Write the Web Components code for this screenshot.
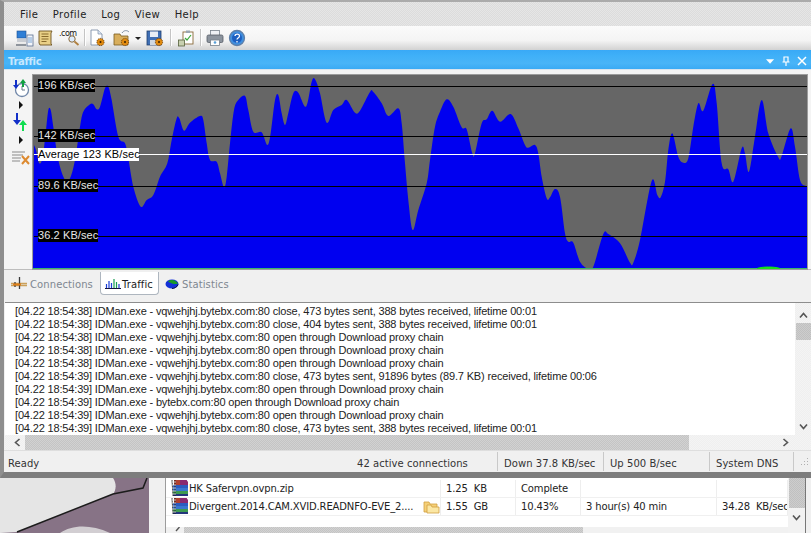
<!DOCTYPE html>
<html>
<head>
<meta charset="utf-8">
<title>Traffic</title>
<style>
html, body { margin: 0; padding: 0; background: #f0f0f0; }
body { width: 811px; height: 533px; overflow: hidden; font-family: "DejaVu Sans", sans-serif; }
</style>
</head>
<body>
<app-window>
  <menu-bar>
    <span>File</span><span>Profile</span><span>Log</span><span>View</span><span>Help</span>
  </menu-bar>
  <tool-bar></tool-bar>
  <pane-title>Traffic</pane-title>
  <traffic-panel></traffic-panel>
  <tab-strip></tab-strip>
  <log-view></log-view>
  <status-bar></status-bar>
</app-window>
<download-strip></download-strip>

<script>
'use strict';

const GEAR = (x, y) => `<circle cx="${x}" cy="${y}" r="3.6" fill="#e08a10" stroke="#5a3000" stroke-width=".8" stroke-dasharray="1.2 .8"/><circle cx="${x}" cy="${y}" r="1" fill="#3a2000"/>`;

class AppWindow extends HTMLElement {
  constructor() {
    super();
    this.attachShadow({mode: 'open'}).innerHTML = `
<style>
:host {
  display: flex;
  flex-direction: column;
  box-sizing: border-box;
  width: 811px;
  height: 478px;
  border-top: 2px solid #ababab;
  border-left: 4px solid #8e8e8e;
  border-bottom: 6px solid #7d7d7d;
  background: #f0f0f0;
}
</style>
<slot></slot>`;
  }
}

class MenuBar extends HTMLElement {
  constructor() {
    super();
    this.attachShadow({mode: 'open'}).innerHTML = `
<style>
:host {
  display: flex;
  height: 24px;
  align-items: center;
  padding-left: 16px;
  gap: 14.5px;
  font: 10px "DejaVu Sans", sans-serif;
  letter-spacing: .4px;
  color: #222;
  background: repeating-conic-gradient(#dcdcdc 0 25%, #e6e6e6 0 50%) 0 0 / 2px 2px;
}
::slotted(span) { padding-top: 1px; }
</style>
<slot></slot>`;
  }
}

class ToolBar extends HTMLElement {
  constructor() {
    super();
    this.attachShadow({mode: 'open'}).innerHTML = `
<style>
:host {
  display: flex;
  height: 24px;
  align-items: center;
  padding-left: 12px;
  background: linear-gradient(#fbfbfb, #f4f4f4 60%, #d2d2d2);
}
svg { display: block; width: 18px; height: 18px; flex: none; }
.sep { width: 1px; height: 17px; background: #c4c4c4; box-shadow: 1px 0 #fff; flex: none; }
.dom { font: 8px "DejaVu Sans", sans-serif; color: #111; letter-spacing: -.5px; }
.com { position: relative; width: 24px; height: 18px; flex: none; }
.com span { position: absolute; left: 0; top: 0; }
.com svg { position: absolute; left: 6px; top: 2px; width: 16px; height: 16px; }
</style>
<svg viewBox="0 0 18 18"><rect x="1" y="2" width="9" height="7" fill="#2f7fd6" stroke="#1c4f90" stroke-width=".6"/><rect x="1" y="10" width="9" height="3" fill="#c8ccd2"/><path d="M0 15h10v2H0z" fill="#8e949c"/><rect x="11" y="6" width="6" height="11" fill="#f4f6fa" stroke="#5a6e90" stroke-width=".8"/><path d="M12 9h4M12 11h4M12 13h4" stroke="#5a8fc8" stroke-width=".8"/></svg>
<svg viewBox="0 0 18 18" style="margin-left:2px"><path d="M3 2h13l-1 2v11l1 1H4l-1-2V4z" fill="#e9cf86" stroke="#6d5320" stroke-width=".9"/><path d="M5.500 5h7M5.500 7.500h7M5.500 10h7M5.500 12.500h5" stroke="#7d5f22" stroke-width=".9"/></svg>
<div class="com" style="margin-left:5px"><span class="dom">.com</span><svg viewBox="0 0 16 16"><circle cx="7" cy="8" r="3.200" fill="#dcecff" stroke="#8a6a3a" stroke-width="1"/><path d="M9.500 10.500l4 3.500" stroke="#b08040" stroke-width="1.800"/></svg></div>
<div class="sep" style="margin-left:1px"></div>
<svg viewBox="0 0 18 18" style="margin-left:3px"><path d="M3 1h7l4 4v11H3z" fill="#fff" stroke="#8090a8" stroke-width=".9"/><path d="M10 1v4h4" fill="#d8e4f4" stroke="#8090a8" stroke-width=".7"/>${GEAR(12.500, 13)}</svg>
<svg viewBox="0 0 18 18" style="margin-left:7px"><path d="M1 5h6l1 2h7v9H1z" fill="#d8ae5c" stroke="#7a5a20" stroke-width=".8"/><path d="M9 4c2-3 5-3 7-1" fill="none" stroke="#7c8ca0" stroke-width="1"/>${GEAR(12, 13)}</svg>
<svg viewBox="0 0 8 18" style="width:8px;margin-left:3px"><path d="M1 8h6l-3 3z" fill="#222"/></svg>
<svg viewBox="0 0 18 18" style="margin-left:4px"><rect x="1" y="2" width="14" height="14" fill="#3f6fb4" stroke="#22406e" stroke-width=".8"/><rect x="4" y="2.500" width="8" height="5.500" fill="#e8eef6"/><rect x="4" y="11" width="8" height="5" fill="#d0d8e0"/>${GEAR(13, 13)}</svg>
<div class="sep" style="margin-left:6px"></div>
<svg viewBox="0 0 18 18" style="margin-left:6px"><rect x="6" y="3" width="10" height="12" fill="#fff" stroke="#8a6a3a" stroke-width=".9"/><rect x="9" y="1.500" width="4" height="2.500" fill="#9aa5b0"/><path d="M8 9l2 2 4-5" fill="none" stroke="#3aa83a" stroke-width="1.200"/><rect x="1.500" y="11" width="6" height="6" fill="#c8d0b0" stroke="#55603c" stroke-width=".8"/></svg>
<div class="sep" style="margin-left:5px"></div>
<svg viewBox="0 0 18 18" style="margin-left:5px"><rect x="4.500" y="1.500" width="9" height="5" fill="#eef0f4" stroke="#77808a" stroke-width=".8"/><rect x="1" y="6" width="16" height="7.500" rx="1.500" fill="#8c949e" stroke="#555c66" stroke-width=".8"/><rect x="4.500" y="11" width="9" height="5.500" fill="#fff" stroke="#77808a" stroke-width=".8"/><circle cx="9" cy="13.500" r="1.300" fill="#58a0d8"/></svg>
<svg viewBox="0 0 18 18" style="margin-left:4px"><circle cx="9" cy="9" r="7.500" fill="#3f8fe0" stroke="#5f7fa8" stroke-width="1.300"/><circle cx="9" cy="9" r="5" fill="#1d5fc0"/><path d="M7 7c0-2.500 4.500-2.500 4.500 0 0 2-2.500 2-2.500 3.500M9 12v1.500" fill="none" stroke="#fff" stroke-width="1.300"/></svg>`;
  }
}

class PaneTitle extends HTMLElement {
  constructor() {
    super();
    this.attachShadow({mode: 'open'}).innerHTML = `
<style>
:host {
  display: flex;
  height: 20px;
  box-sizing: border-box;
  align-items: center;
  justify-content: space-between;
  padding: 3px 4px 0 4px;
  font: bold 10px "DejaVu Sans", sans-serif;
  letter-spacing: -.3px;
  color: #c6e8ff;
  background: linear-gradient(#39a9f6, #3fb0f8 30%, #49b4f7 70%, #3aaaf4);
}
.btns { display: flex; align-items: center; gap: 6px; margin-top: -1px; }
svg { display: block; width: 10px; height: 10px; }
</style>
<span><slot></slot></span>
<span class="btns">
  <svg viewBox="0 0 10 10" style="width:9px"><path d="M0 3h9L4.500 8z" fill="#fff"/></svg>
  <svg viewBox="0 0 10 10"><path d="M3 1h4v5H3zM1.500 6h7M5 6v4" fill="none" stroke="#fff" stroke-width="1.200"/></svg>
  <svg viewBox="0 0 10 10"><path d="M1 1l8 8M9 1l-8 8" stroke="#fff" stroke-width="1.500"/></svg>
</span>`;
  }
}

// outline of the graph, read off the picture: [x, y] in page pixels
const LEFT_PTS = [[12,225],[18,240],[28,280],[38,260],[48,180],[55,120],[62,120],[70,170],[85,270],[105,330],[120,325],[135,270],[150,170],[160,125],[180,103],[190,103],[200,118],[210,110],[225,55],[235,50],[245,90],[265,200],[285,220],[295,265],[310,350],[332,410],[350,390],[370,375],[390,320],[412,280],[425,210],[440,145],[448,145],[462,182],[480,158],[510,138],[520,150],[530,220],[540,270],[560,275],[570,310],[582,352],[590,320],[600,220],[612,120],[625,90],[645,78],[655,120],[670,185],[695,187],[712,225],[722,190],[735,90],[745,75],[755,130],[765,165],[775,130],[790,70],[805,68],[828,110],[845,35],[855,28],[870,70],[890,158],[910,120],[935,105],[950,90],[975,128],[990,122],[1020,66],[1030,66],[1055,100],[1075,138],[1105,115],[1115,160],[1125,280],[1135,390],[1148,480],[1165,420]].map(([x, y]) => [30 + x / 3, 70 + y / 3]);
const RIGHT_PTS = [[20,340],[30,270],[45,170],[60,125],[80,88],[100,110],[125,172],[140,178],[157,250],[165,250],[185,160],[200,148],[217,122],[240,155],[272,132],[295,175],[315,225],[325,233],[345,225],[355,250],[365,320],[380,385],[390,382],[405,357],[420,380],[435,490],[445,515],[460,518],[480,575],[505,597],[520,590],[550,492],[565,492],[600,520],[630,578],[640,578],[660,510],[695,333],[712,375],[722,382],[735,335],[745,240],[757,190],[775,260],[790,278],[805,265],[820,170],[835,100],[850,122],[878,42],[890,100],[905,280],[925,298],[940,335],[965,235],[975,250],[987,305],[1005,200],[1025,90],[1045,190],[1075,262],[1085,258],[1112,175],[1125,230],[1140,330],[1158,348]].map(([x, y]) => [420 + x / 3, 70 + y / 3]);

function smoothPath(pts) {
  let d = `M${pts[0][0]} ${pts[0][1]}`;
  for (let i = 0; i < pts.length - 1; i++) {
    const p0 = pts[i - 1] || pts[i];
    const p1 = pts[i];
    const p2 = pts[i + 1];
    const p3 = pts[i + 2] || p2;
    const c1 = [p1[0] + (p2[0] - p0[0]) / 6, p1[1] + (p2[1] - p0[1]) / 6];
    const c2 = [p2[0] - (p3[0] - p1[0]) / 6, p2[1] - (p3[1] - p1[1]) / 6];
    d += `C${c1[0].toFixed(1)} ${c1[1].toFixed(1)} ${c2[0].toFixed(1)} ${c2[1].toFixed(1)} ${p2[0].toFixed(1)} ${p2[1].toFixed(1)}`;
  }
  return d;
}

class TrafficPanel extends HTMLElement {
  constructor() {
    super();
    const outline = smoothPath(LEFT_PTS.concat(RIGHT_PTS));
    const area = `M33 269L34 145${outline.replace(/^M/, 'L')}L807 186L807 269Z`;
    const marks = [
      {y: 86, text: '196 KB/sec', w: 57},
      {y: 136, text: '142 KB/sec', w: 57},
      {y: 186, text: '89.6 KB/sec', w: 60},
      {y: 236, text: '36.2 KB/sec', w: 60},
    ];
    this.attachShadow({mode: 'open'}).innerHTML = `
<style>
:host {
  display: flex;
  height: 200px;
  box-sizing: border-box;
  padding-top: 5px;
  background: #f4f4f4;
  border-top: 1px solid #d9e4ee;
}
.side {
  width: 29px;
  flex: none;
  display: flex;
  flex-direction: column;
  align-items: center;
  padding: 3px 0 0 4px;
  box-sizing: border-box;
  gap: 3px;
}
.side svg { display: block; flex: none; }
.plot {
  position: relative;
  width: 774px;
  height: 194px;
  flex: none;
  outline: 1px solid #9c9c9c;
}
.plot > svg { display: block; width: 774px; height: 194px; }
.mark {
  position: absolute;
  left: 5px;
  height: 13px;
  line-height: 13px;
  padding: 0;
  font: 11px/13px "Liberation Sans", sans-serif;
  letter-spacing: .1px;
  white-space: nowrap;
  color: #e8e8e8;
  background: #000;
}
.mark.avg { color: #000; background: #fff; }
</style>
<div class="side">
  <svg width="20" height="20" viewBox="0 0 20 20"><circle cx="11" cy="12" r="6.500" fill="#fff" stroke="#6f86a8" stroke-width="1.300"/><path d="M11 8v4h3" stroke="#66788c" fill="none"/><path d="M4 2v5H2l3 4 3-4H6V2z" fill="#1230c8"/><path d="M11 9V5H9l3-4 3 4h-2v4z" fill="#10a040"/></svg>
  <svg width="6" height="8" viewBox="0 0 6 8"><path d="M1 0l4 4-4 4z" fill="#111"/></svg>
  <svg width="20" height="20" viewBox="0 0 20 20" style="margin-top:1px"><path d="M5 0v7H2l4 5 4-5H7V0z" fill="#1230c8"/><path d="M11 18v-6H8l4-5 4 5h-3v6z" fill="#0fdc50"/></svg>
  <svg width="6" height="8" viewBox="0 0 6 8"><path d="M1 0l4 4-4 4z" fill="#111"/></svg>
  <svg width="20" height="16" viewBox="0 0 20 16" style="margin-top:3px"><path d="M1 2h13M1 5h11M1 8h9M1 11h8" stroke="#8a8a8a" stroke-width="1"/><path d="M11 6l7 8M18 6l-7 8" stroke="#dd8a30" stroke-width="2"/></svg>
</div>
<div class="plot">
  <svg viewBox="33 75 774 194" preserveAspectRatio="none">
    <rect x="33" y="75" width="774" height="194" fill="#666"/>
    <path d="${area}" fill="#0000f0"/>
    <path d="M33 269h774" stroke="#3bb56a" stroke-width="2"/>
    <path d="M757 268.500c5-2 18-2 23 0z" fill="#18e018" stroke="#18e018"/>
    ${marks.map((m) => `<path d="M34 ${m.y + .5}h773" stroke="#000" stroke-width="1"/>`).join('')}
    <path d="M34 154.500h773" stroke="#fff" stroke-width="1"/>
  </svg>
  ${marks.map((m) => `<div class="mark" style="top:${m.y - 82}px;width:${m.w}px">${m.text}</div>`).join('')}
  <div class="mark avg" style="top:73px;width:101px">Average 123 KB/sec</div>
</div>`;
  }
}

class TabStrip extends HTMLElement {
  constructor() {
    super();
    this.attachShadow({mode: 'open'}).innerHTML = `
<style>
:host {
  display: flex;
  height: 33px;
  box-sizing: border-box;
  padding: 2px 0 0 6px;
  background: #f0f0f0;
  font: 10px "DejaVu Sans", sans-serif;
  letter-spacing: .1px;
  color: #7e8790;
  border-top: 1px solid #bdbdbd;
}
.tab {
  display: flex;
  align-items: center;
  height: 23px;
  gap: 1px;
  box-sizing: border-box;
}
.tab span { padding-top: 2px; }
.tab svg { display: block; flex: none; }
.active {
  background: #fff;
  color: #1c1c1c;
  border: 1px solid #aeb6bf;
  border-top: 0;
  border-radius: 0 0 4px 4px;
  margin: 0 1px 0 0;
  padding: 0 4px;
  width: 59px;
}
</style>
<div class="tab" style="width:90px">
  <svg width="19" height="15" viewBox="0 0 19 15"><path d="M1 7.500h16M1 9.500h16" stroke="#caa05a" stroke-width="1.500"/><path d="M9.500 1v12M5 6v5" stroke="#3a3a3a" stroke-width="1.300"/><path d="M3 8.500h8" stroke="#e0801c" stroke-width="2"/></svg>
  <span>Connections</span>
</div>
<div class="tab active">
  <svg width="16" height="11" viewBox="0 0 16 11"><path d="M1.500 10V6M4 10V3M6.500 10V5" stroke="#1c3fd8" stroke-width="1.200"/><path d="M9 10V1M11.500 10V4" stroke="#18a050" stroke-width="1.200"/><path d="M14 10V6" stroke="#1c3fd8" stroke-width="1.200"/><path d="M0 10.500h16" stroke="#14143c"/></svg>
  <span>Traffic</span>
</div>
<div class="tab" style="padding-left:5px;gap:3px">
  <svg width="14" height="10" viewBox="0 0 14 10"><ellipse cx="7" cy="5" rx="6.500" ry="4.500" fill="#1230d8"/><path d="M3 2.500c3-2.500 8-1.500 10 2-3 1.500-7 0-10-2z" fill="#1a9a2a"/><path d="M7 9.500c2.500 0 5-1.500 6-4" stroke="#101040" fill="none"/></svg>
  <span>Statistics</span>
</div>`;
  }
}

class LogView extends HTMLElement {
  constructor() {
    super();
    const host = 'IDMan.exe - vqwehjhj.bytebx.com:80';
    const chain = 'open through Download proxy chain';
    const lines = [
      `[04.22 18:54:38] ${host} close, 473 bytes sent, 388 bytes received, lifetime 00:01`,
      `[04.22 18:54:38] ${host} close, 404 bytes sent, 388 bytes received, lifetime 00:01`,
      `[04.22 18:54:38] ${host} ${chain}`,
      `[04.22 18:54:38] ${host} ${chain}`,
      `[04.22 18:54:38] ${host} ${chain}`,
      `[04.22 18:54:39] ${host} close, 473 bytes sent, 91896 bytes (89.7 KB) received, lifetime 00:06`,
      `[04.22 18:54:39] ${host} ${chain}`,
      `[04.22 18:54:39] IDMan.exe - bytebx.com:80 ${chain}`,
      `[04.22 18:54:39] ${host} ${chain}`,
      `[04.22 18:54:39] ${host} close, 473 bytes sent, 388 bytes received, lifetime 00:01`,
    ];
    this.attachShadow({mode: 'open'}).innerHTML = `
<style>
:host {
  display: grid;
  grid-template-columns: 790px 16px;
  grid-template-rows: 132px 15px;
  margin-left: 1px;
  height: 147px;
  background: #f0f0f0;
  border-top: 1px solid #8d8d8d;
}
.rows {
  grid-column: 1;
  grid-row: 1;
  background: #fff;
  padding: 2px 0 0 10px;
  box-sizing: border-box;
  font: 11px/13px "Liberation Sans", sans-serif;
  letter-spacing: -.16px;
  color: #222;
  white-space: nowrap;
  overflow: hidden;
}
.rows div { height: 13px; }
.vbar {
  grid-column: 2;
  grid-row: 1 / 3;
  display: flex;
  flex-direction: column;
  align-items: center;
  padding-top: 9px;
  box-sizing: border-box;
  background: repeating-conic-gradient(#efefef 0 25%, #f4f4f4 0 50%) 0 0 / 2px 2px;
}
.vthumb {
  width: 15px;
  height: 17px;
  margin-top: 4px;
  background: repeating-conic-gradient(#c0c0c0 0 25%, #cdcdcd 0 50%) 0 0 / 2px 2px;
}
.vdown { margin-top: 83px; }
.hbar {
  grid-column: 1;
  grid-row: 2;
  display: flex;
  align-items: center;
  padding-left: 9px;
  background: repeating-conic-gradient(#efefef 0 25%, #f4f4f4 0 50%) 0 0 / 2px 2px;
}
.hthumb {
  width: 664px;
  height: 15px;
  margin-left: 4px;
  background: repeating-conic-gradient(#c4c4c4 0 25%, #d2d2d2 0 50%) 0 0 / 2px 2px;
}
.hright { margin-left: 93px; }
svg { display: block; flex: none; }
</style>
<div class="rows">${lines.map((line) => `<div>${line}</div>`).join('')}</div>
<div class="vbar">
  <svg width="9" height="7" viewBox="0 0 9 7"><path d="M1 5.500l3.500-4 3.500 4" fill="none" stroke="#555" stroke-width="1.600"/></svg>
  <div class="vthumb"></div>
  <svg class="vdown" width="9" height="7" viewBox="0 0 9 7"><path d="M1 1.500l3.500 4 3.500-4" fill="none" stroke="#555" stroke-width="1.600"/></svg>
</div>
<div class="hbar">
  <svg width="7" height="9" viewBox="0 0 7 9"><path d="M5.500 1l-4 3.500 4 3.500" fill="none" stroke="#555" stroke-width="1.600"/></svg>
  <div class="hthumb"></div>
  <svg class="hright" width="7" height="9" viewBox="0 0 7 9"><path d="M1.500 1l4 3.500-4 3.500" fill="none" stroke="#555" stroke-width="1.600"/></svg>
</div>`;
  }
}

class StatusBar extends HTMLElement {
  constructor() {
    super();
    this.attachShadow({mode: 'open'}).innerHTML = `
<style>
:host {
  display: grid;
  grid-template-columns: 347px 147px 106px 106px 84px 1fr;
  height: 22px;
  align-items: stretch;
  font: 10px "DejaVu Sans", sans-serif;
  letter-spacing: .05px;
  color: #333;
  background: #f0f0f0;
  border-top: 1px solid #dedede;
  box-sizing: border-box;
}
div { display: flex; align-items: center; white-space: nowrap; padding: 3px 0 0 6px; margin: 1px 0; border-right: 1px solid #c9c9c9; }
.first { padding-left: 4px; justify-content: space-between; }
.wide { padding-left: 6px; }
.grip { border: 0; padding: 0 0 0 6px; }
</style>
<div class="first" style="border:0">Ready</div>
<div class="wide">42 active connections</div>
<div>Down 37.8 KB/sec</div>
<div>Up 500 B/sec</div>
<div>System DNS</div>
<div class="grip"><svg width="9" height="9" viewBox="0 0 9 9"><path d="M7 1h1v1H7zM4 4h1v1H4zM7 4h1v1H7zM1 7h1v1H1zM4 7h1v1H4zM7 7h1v1H7z" fill="#b0b0b0"/></svg></div>`;
  }
}

class DownloadStrip extends HTMLElement {
  constructor() {
    super();
    const rar = `<svg width="19" height="18" viewBox="0 0 19 18"><path d="M3 0h12l2 3v3H3z" fill="#8a2a70"/><path d="M3 0h6v6H3z" fill="#b04030"/><path d="M2 6h15v3H2z" fill="#2c5cc0"/><path d="M2 9h15v3H2z" fill="#3a76d0"/><path d="M2 12h15v3H2z" fill="#3e9a50"/><path d="M2 15h15v2H2z" fill="#24367c"/><path d="M1 1l1 16M4 1v16" stroke="#111" stroke-width=".8"/><path d="M1 3h4M1 6h4M1 9h4M1 12h4M1 15h4" stroke="#eee" stroke-width=".8"/></svg>`;
    this.attachShadow({mode: 'open'}).innerHTML = `
<style>
:host {
  display: flex;
  height: 55px;
  overflow: hidden;
  background: #f0f0f0;
  font: 10px "DejaVu Sans", sans-serif;
  letter-spacing: -.15px;
  color: #222;
}
.photo { width: 149px; height: 55px; flex: none; display: block; }
.gap { width: 16px; flex: none; background: #f0f0f0; border-right: 1px solid #9c9c9c; }
.list { position: relative; width: 622px; flex: none; background: #fff; padding-top: 2px; box-sizing: border-box; }
.row {
  display: grid;
  grid-template-columns: 255px 20px 75px 65px 136px 71px;
  height: 17px;
  align-items: center;
  border-bottom: 1px solid #f0f0f0;
  white-space: nowrap;
}
.row > * { height: 17px; display: flex; align-items: center; border-right: 1px solid #eee; box-sizing: border-box; padding-left: 5px; overflow: hidden; }
.name { padding-left: 5px !important; border: 0 !important; }
.name svg { flex: none; margin-top: -2px; margin-right: -1px; }
.hbar {
  display: flex;
  align-items: center;
  position: absolute;
  left: 0;
  right: 0;
  bottom: 0;
  height: 6px;
  padding-left: 9px;
  background: #f1f1f1;
}
.hthumb { width: 399px; height: 6px; background: repeating-conic-gradient(#c4c4c4 0 25%, #d2d2d2 0 50%) 0 0 / 2px 2px; margin-left: 3px; }
.vbar {
  width: 17px;
  flex: none;
  background: #f2f2f2;
  display: flex;
  flex-direction: column;
  align-items: center;
  border-right: 1px solid #777;
}
.vthumb { width: 16px; height: 30px; background: repeating-conic-gradient(#c0c0c0 0 25%, #cdcdcd 0 50%) 0 0 / 2px 2px; }
.end { flex: 1; background: #f0f0f0; }
</style>
<svg class="photo" viewBox="0 0 149 55" preserveAspectRatio="none">
  <rect width="149" height="55" fill="#877386"/>
  <path d="M0 0h113c4 6 3 12 0 16L17 54 0 55z" fill="#e5e5e5"/>
  <path d="M60 55c12-8 30-9 50 0z" fill="#d2ced2"/>
  <path d="M17 54L113 16l30-6 4-10" fill="none" stroke="#1c1c1c" stroke-width="1.500"/>
</svg>
<div class="gap"></div>
<div class="list">
  <div class="row">
    <span class="name">${rar}<span>HK Safervpn.ovpn.zip</span></span><span></span><span>1.25&nbsp; KB</span><span>Complete</span><span></span><span></span>
  </div>
  <div class="row">
    <span class="name">${rar}<span>Divergent.2014.CAM.XVID.READNFO-EVE_2....</span></span>
    <span style="padding-left:2px"><svg width="17" height="15" viewBox="0 0 17 15"><path d="M1 3h5l1 2h7v8H1z" fill="#f5d078" stroke="#d0a040" stroke-width=".8"/><path d="M4 6h4l1 2h7v6H4z" fill="#fbe7a4" stroke="#d0a040" stroke-width=".8"/></svg></span>
    <span>1.55&nbsp; GB</span><span>10.43%</span><span>3 hour(s) 40 min</span><span>34.28&nbsp; KB/sec</span>
  </div>
  <div class="hbar"><svg width="6" height="6" viewBox="0 0 6 6"><path d="M4.500 0L1 4" fill="none" stroke="#555" stroke-width="1.400"/></svg><div class="hthumb"></div></div>
</div>
<div class="vbar">
  <div class="vthumb"></div>
  <svg style="margin-top:6px" width="9" height="7" viewBox="0 0 9 7"><path d="M1 1.500l3.500 4 3.500-4" fill="none" stroke="#555" stroke-width="1.600"/></svg>
</div>
<div class="end"></div>`;
  }
}

customElements.define('app-window', AppWindow);
customElements.define('menu-bar', MenuBar);
customElements.define('tool-bar', ToolBar);
customElements.define('pane-title', PaneTitle);
customElements.define('traffic-panel', TrafficPanel);
customElements.define('tab-strip', TabStrip);
customElements.define('log-view', LogView);
customElements.define('status-bar', StatusBar);
customElements.define('download-strip', DownloadStrip);
</script>
</body>
</html>
